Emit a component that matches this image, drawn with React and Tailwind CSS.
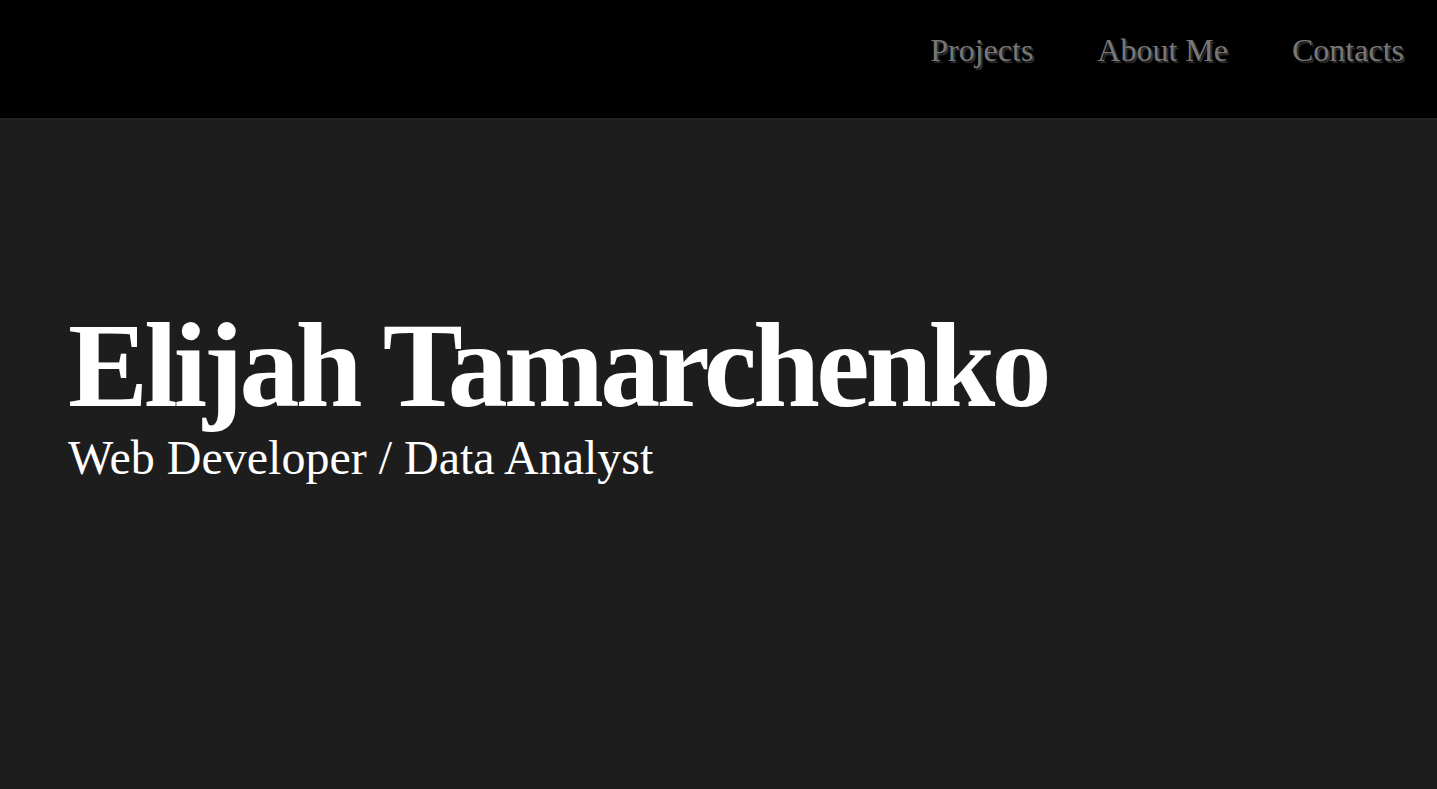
export default function App() {
  const links = ['Projects', 'About Me', 'Contacts'];

  return (
    <div className="min-h-screen bg-[#1e1d1e] font-['Liberation_Serif',_'Times_New_Roman',_serif]">
      {/* Header */}
      <header className="h-[120px] bg-black border-b-2 border-[#242324] flex items-start justify-end pr-[33px] pt-[28px]">
        <nav className="flex gap-[64px]">
          {links.map((link) => (
            <a
              key={link}
              href="#"
              className="text-[32px] leading-[44px] text-[#777] [text-shadow:2px_2px_1px_#333]"
            >
              {link}
            </a>
          ))}
        </nav>
      </header>

      {/* Hero */}
      <main className="pl-[68px] pt-[188px]">
        <h1 className="text-[120px] font-bold leading-[116px] tracking-[-3.8px] text-white">Elijah Tamarchenko</h1>
        <p className="mt-[6px] text-[48px] leading-[56px] text-white">Web Developer / Data Analyst</p>
      </main>
    </div>
  );
}
